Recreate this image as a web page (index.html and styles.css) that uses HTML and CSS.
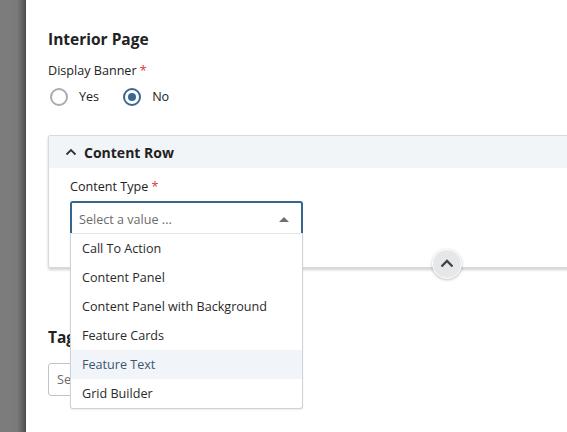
FILE: index.html
```html
<!DOCTYPE html>
<html>
<head>
<meta charset="utf-8">
<link rel="stylesheet" href="styles.css">
</head>
<body>
<div class="sidebar"></div>
<div class="main">
  <h2 class="title">Interior Page</h2>
  <div class="label">Display Banner <span class="req">*</span></div>
  <div class="radios">
    <label class="radio"><span class="circle"></span>Yes</label>
    <label class="radio"><span class="circle checked"></span>No</label>
  </div>

  <div class="panel">
    <div class="panel-head">
      <svg class="chev" width="12" height="8" viewBox="0 0 12 8"><path d="M1.5 6.5 L6 2 L10.5 6.5" fill="none" stroke="#333" stroke-width="1.8"/></svg>
      <span>Content Row</span>
    </div>
    <div class="panel-body">
      <div class="label">Content Type <span class="req">*</span></div>
      <div class="select-wrap">
        <div class="select">
          <span class="placeholder">Select a value ...</span>
          <span class="tri"></span>
        </div>
        <ul class="menu">
          <li>Call To Action</li>
          <li>Content Panel</li>
          <li>Content Panel with Background</li>
          <li>Feature Cards</li>
          <li class="hl">Feature Text</li>
          <li>Grid Builder</li>
        </ul>
      </div>
    </div>
    <button class="collapse">
      <svg width="14" height="9" viewBox="0 0 14 9"><path d="M1.5 7.5 L7 2 L12.5 7.5" fill="none" stroke="#444" stroke-width="2.4"/></svg>
    </button>
  </div>

  <h2 class="title tags">Tags</h2>
  <div class="input"><span class="placeholder">Select a value ...</span></div>
</div>
</body>
</html>
```

FILE: styles.css
```css
html, body {
  margin: 0;
  height: 100%;
  overflow: hidden;
}
body {
  display: flex;
  font-family: "Open Sans", "Noto Sans", sans-serif;
  color: #222;
  background: #fff;
}
.sidebar {
  width: 26px;
  flex: none;
  background: linear-gradient(to right, #7d7d7d 0, #7a7a7a 17px, #5e5e5e 23px, #4a4a4a 26px);
}
.main {
  flex: 1;
  padding-left: 22px;
  min-width: 0;
}
.title {
  font-size: 15.5px;
  font-weight: 700;
  line-height: 22px;
  margin: 28px 0 12px;
  color: #222;
}
.label {
  font-size: 12.6px;
  line-height: 18px;
  color: #222;
}
.req {
  color: #e0343a;
}
.radios {
  display: flex;
  gap: 24px;
  margin-top: 7px;
  padding-left: 2px;
}
.radio {
  display: flex;
  align-items: center;
  gap: 11px;
  font-size: 12.6px;
  line-height: 20px;
}
.circle {
  width: 14px;
  height: 14px;
  border: 2px solid #a8acb1;
  border-radius: 50%;
  position: relative;
}
.circle.checked {
  border-color: #3a6791;
}
.circle.checked::after {
  content: "";
  position: absolute;
  left: 3px;
  top: 3px;
  width: 8px;
  height: 8px;
  border-radius: 50%;
  background: #3a6791;
}
.panel {
  position: relative;
  margin-top: 28px;
  margin-right: -20px;
  border: 1px solid #d6dbe1;
  border-radius: 2px;
  box-shadow: 0 2px 3px rgba(0,0,0,0.18);
  background: #fff;
  height: 131px;
}
.panel-head {
  background: #f2f5f8;
  height: 32px;
  display: flex;
  align-items: center;
  gap: 7px;
  padding-left: 16px;
  font-size: 14px;
  font-weight: 700;
}
.panel-body {
  padding: 10px 0 0 21px;
}
.select-wrap {
  position: relative;
  width: 233px;
  margin-top: 5px;
}
.select {
  height: 28px;
  border: 2px solid #356590;
  border-bottom: none;
  border-radius: 3px 3px 0 0;
  display: flex;
  align-items: center;
  justify-content: space-between;
  padding: 2px 12px 0 7px;
  font-size: 12.6px;
}
.placeholder {
  color: #6b6b6b;
}
.tri {
  width: 0;
  height: 0;
  border-left: 5px solid transparent;
  border-right: 5px solid transparent;
  border-bottom: 5px solid #707070;
}
.menu {
  position: absolute;
  z-index: 3;
  left: 0;
  top: 32px;
  width: 231px;
  margin: 0;
  padding: 0;
  list-style: none;
  background: #fff;
  border: 1px solid #cfd3d8;
  border-top-color: #e4e6e9;
  border-radius: 0 0 3px 3px;
  box-shadow: 0 1px 2px rgba(0,0,0,0.08);
}
.menu li {
  height: 29px;
  line-height: 29px;
  padding-left: 11px;
  font-size: 12.6px;
  color: #2a2a2a;
}
.menu li.hl {
  background: #f1f5f9;
  color: #3b5673;
}
.collapse {
  position: absolute;
  left: 383px;
  top: 113px;
  width: 30px;
  height: 30px;
  border-radius: 50%;
  border: 1px solid #fff;
  background: #e6e7ea;
  box-shadow: 0 1px 3px rgba(0,0,0,0.25);
  display: flex;
  align-items: center;
  justify-content: center;
  padding: 0 0 2px;
  z-index: 2;
}
.tags {
  margin-top: 58px;
  margin-bottom: 15px;
}
.input {
  height: 31px;
  width: 220px;
  border: 1px solid #bfc4ca;
  border-radius: 3px;
  display: flex;
  align-items: center;
  padding-left: 8px;
  font-size: 12.6px;
  overflow: hidden;
  white-space: nowrap;
}
```
